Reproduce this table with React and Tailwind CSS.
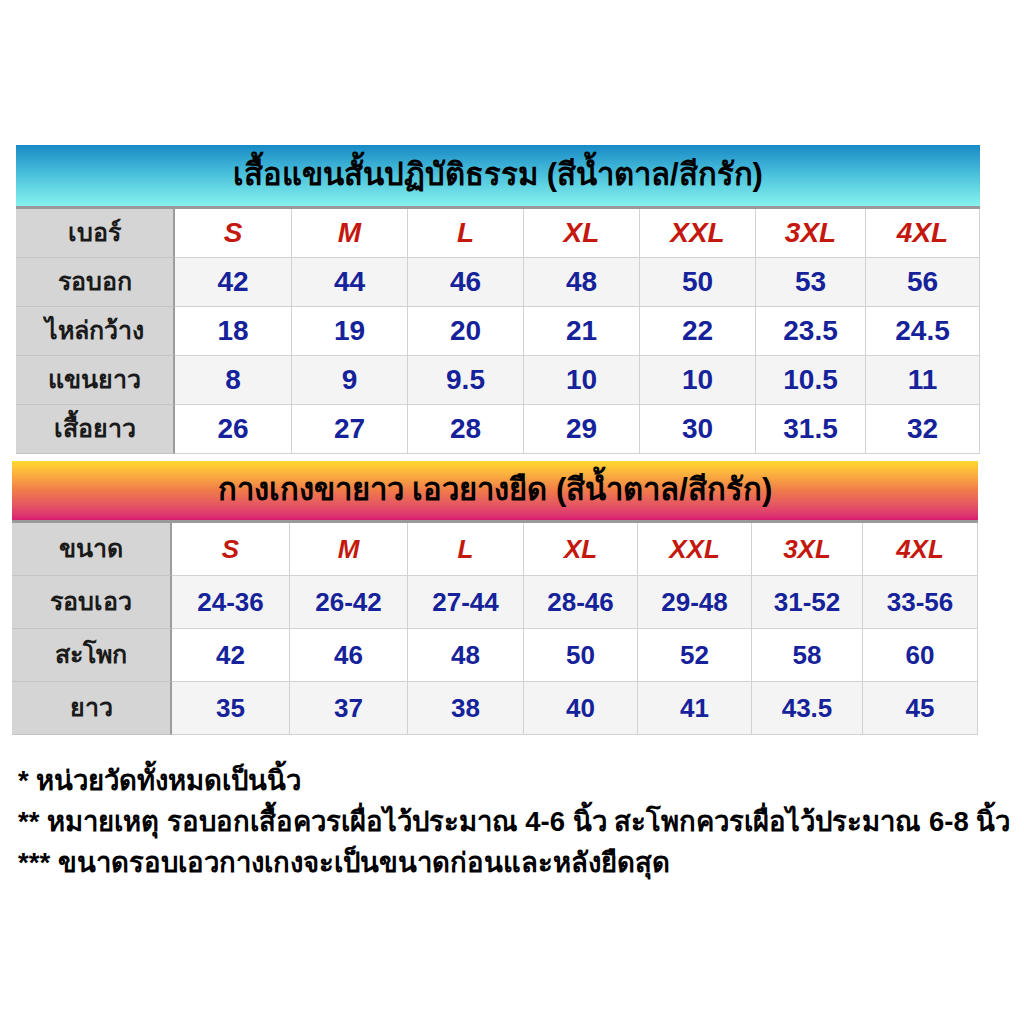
import React from 'react';

const FONT = { fontFamily: '"Liberation Sans", "Noto Sans", "DejaVu Sans", sans-serif' };

const shirt = {
  title: 'เสื้อแขนสั้นปฏิบัติธรรม (สีน้ำตาล/สีกรัก)',
  head: 'เบอร์',
  rows: [
    ['รอบอก', '42', '44', '46', '48', '50', '53', '56'],
    ['ไหล่กว้าง', '18', '19', '20', '21', '22', '23.5', '24.5'],
    ['แขนยาว', '8', '9', '9.5', '10', '10', '10.5', '11'],
    ['เสื้อยาว', '26', '27', '28', '29', '30', '31.5', '32'],
  ],
};

const pants = {
  title: 'กางเกงขายาว เอวยางยืด (สีน้ำตาล/สีกรัก)',
  head: 'ขนาด',
  rows: [
    ['รอบเอว', '24-36', '26-42', '27-44', '28-46', '29-48', '31-52', '33-56'],
    ['สะโพก', '42', '46', '48', '50', '52', '58', '60'],
    ['ยาว', '35', '37', '38', '40', '41', '43.5', '45'],
  ],
};

const sizes = ['S', 'M', 'L', 'XL', 'XXL', '3XL', '4XL'];

function SizeTable({ data, headerClass, gridClass, rowH, numSize, wrapClass }) {
  return (
    <div className={wrapClass}>
      <div className={`flex items-center justify-center ${headerClass}`}>
        <span className="text-[31px] font-bold text-black">{data.title}</span>
      </div>
      <div className="h-[3px] bg-[#9a9a9a]" />
      <div className={`grid ${gridClass}`}>
        <div className={`${rowH} bg-[#d5d5d5] border-r-2 border-[#9c9c9c] border-b border-b-[#c4c4c4] flex items-center justify-center text-[25px] font-bold text-[#1a1a1a]`}>
          {data.head}
        </div>
        {sizes.map((s) => (
          <div key={s} className={`${rowH} bg-white border-r border-b border-[#d2d2d2] flex items-center justify-center ${numSize} font-bold italic text-[#c4180e]`}>
            {s}
          </div>
        ))}
        {data.rows.map((row, ri) => {
          const bg = ri % 2 === 0 ? 'bg-[#f4f4f4]' : 'bg-white';
          return (
            <React.Fragment key={row[0]}>
              <div className={`${rowH} bg-[#d5d5d5] border-r-2 border-[#9c9c9c] border-b border-b-[#c4c4c4] flex items-center justify-center text-[25px] font-bold text-[#1a1a1a]`}>
                {row[0]}
              </div>
              {row.slice(1).map((v, ci) => (
                <div key={ci} className={`${rowH} ${bg} border-r border-b border-[#d2d2d2] flex items-center justify-center ${numSize} font-bold text-[#15229a]`}>
                  {v}
                </div>
              ))}
            </React.Fragment>
          );
        })}
      </div>
    </div>
  );
}

export default function App() {
  return (
    <div className="w-[1024px] h-[1024px] bg-white overflow-hidden" style={FONT}>
      <SizeTable
        data={shirt}
        wrapClass="ml-[16px] mt-[145px] w-[964px]"
        headerClass="h-[61px] bg-gradient-to-b from-[#168ac6] via-[#4cc3dc] to-[#86f3ee]"
        gridClass="grid-cols-[159px_117px_116px_116px_116px_116px_110px_114px]"
        rowH="h-[49px]"
        numSize="text-[28px]"
      />
      <SizeTable
        data={pants}
        wrapClass="ml-[12px] mt-[7px] w-[966px]"
        headerClass="h-[59px] bg-gradient-to-b from-[#ffd92c] via-[#f07a48] to-[#d81a72]"
        gridClass="grid-cols-[160px_118px_118px_116px_114px_114px_111px_115px]"
        rowH="h-[53px]"
        numSize="text-[26px]"
      />
      <div className="ml-[18px] mt-[26px] flex flex-col gap-[2px] text-[27.5px] font-bold text-black leading-[39px]" style={{ fontFamily: '"Liberation Sans Narrow", "Liberation Sans", "Noto Sans", sans-serif' }}>
        <div>* หน่วยวัดทั้งหมดเป็นนิ้ว</div>
        <div>** หมายเหตุ รอบอกเสื้อควรเผื่อไว้ประมาณ 4-6 นิ้ว สะโพกควรเผื่อไว้ประมาณ 6-8 นิ้ว</div>
        <div>*** ขนาดรอบเอวกางเกงจะเป็นขนาดก่อนและหลังยืดสุด</div>
      </div>
    </div>
  );
}
